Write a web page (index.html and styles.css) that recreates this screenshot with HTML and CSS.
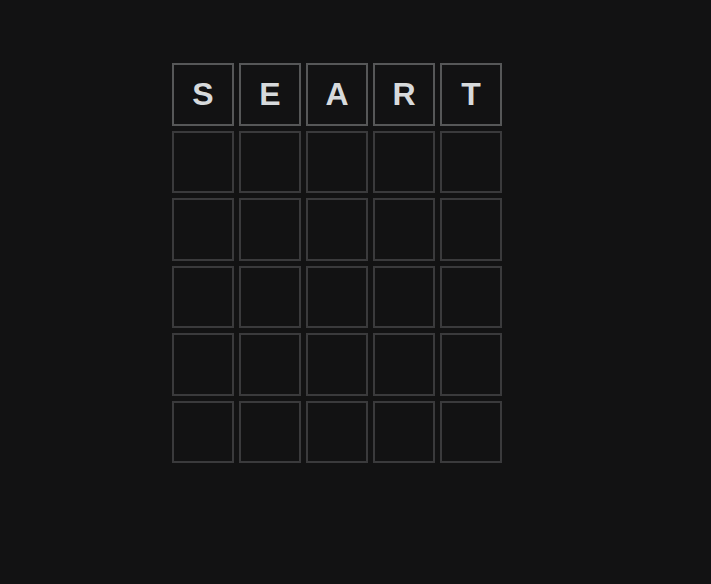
FILE: index.html
```html
<!DOCTYPE html>
<html lang="en">
<head>
<meta charset="utf-8">
<title>Wordle</title>
<link rel="stylesheet" href="styles.css">
</head>
<body>
<main class="game">
  <div class="board">
    <div class="row">
      <div class="tile filled">S</div>
      <div class="tile filled">E</div>
      <div class="tile filled">A</div>
      <div class="tile filled">R</div>
      <div class="tile filled">T</div>
    </div>
    <div class="row"><div class="tile"></div><div class="tile"></div><div class="tile"></div><div class="tile"></div><div class="tile"></div></div>
    <div class="row"><div class="tile"></div><div class="tile"></div><div class="tile"></div><div class="tile"></div><div class="tile"></div></div>
    <div class="row"><div class="tile"></div><div class="tile"></div><div class="tile"></div><div class="tile"></div><div class="tile"></div></div>
    <div class="row"><div class="tile"></div><div class="tile"></div><div class="tile"></div><div class="tile"></div><div class="tile"></div></div>
    <div class="row"><div class="tile"></div><div class="tile"></div><div class="tile"></div><div class="tile"></div><div class="tile"></div></div>
  </div>
</main>
</body>
</html>
```
FILE: styles.css
```css
html, body {
  margin: 0;
  padding: 0;
  background: #121213;
  height: 100%;
}
.game {
  padding: 63px 0 0 172px;
}
.board {
  width: 330px;
  height: 400px;
  display: grid;
  grid-template-rows: repeat(6, 1fr);
  gap: 5px;
}
.row {
  display: grid;
  grid-template-columns: repeat(5, 1fr);
  gap: 5px;
}
.tile {
  box-sizing: border-box;
  border: 2px solid #3a3a3c;
  display: flex;
  align-items: center;
  justify-content: center;
  font-family: "Liberation Sans", Arial, sans-serif;
  font-weight: bold;
  font-size: 32px;
  color: #d7dadc;
  text-transform: uppercase;
}
.tile.filled {
  border-color: #565758;
}
```
